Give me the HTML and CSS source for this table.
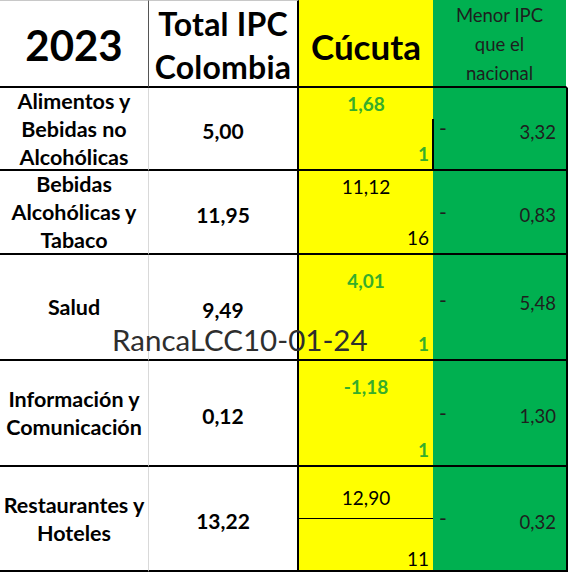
FILE: index.html
```html
<!DOCTYPE html>
<html lang="es">
<head>
  <meta charset="UTF-8" />
  <meta name="viewport" content="width=device-width, initial-scale=1.0"/>
  <title>IPC 2023 Cúcuta</title>
  <link rel="stylesheet" href="styles.css">
</head>
<body>
  <!-- Tabla IPC 2023: Colombia vs Cúcuta -->
  <div class="sheet">
    <div class="cell head year">2023</div>
    <div class="cell head total">Total IPC<br>Colombia</div>
    <div class="cell head city">Cúcuta</div>
    <div class="cell head lower">Menor IPC<br>que el<br>nacional</div>

    <!-- Alimentos -->
    <div class="cell label">Alimentos y<br>Bebidas no<br>Alcohólicas</div>
    <div class="cell total-val">5,00</div>
    <div class="cell city-val">
      <span class="val good">1,68</span>
      <span class="rank good">1</span>
    </div>
    <div class="cell diff first">
      <span class="dash">-</span>
      <span class="num">3,32</span>
    </div>

    <!-- Bebidas alcohólicas -->
    <div class="cell label">Bebidas<br>Alcohólicas y<br>Tabaco</div>
    <div class="cell total-val">11,95</div>
    <div class="cell city-val">
      <span class="val">11,12</span>
      <span class="rank">16</span>
    </div>
    <div class="cell diff">
      <span class="dash">-</span>
      <span class="num">0,83</span>
    </div>

    <!-- Salud -->
    <div class="cell label">Salud</div>
    <div class="cell total-val">9,49</div>
    <div class="cell city-val tall">
      <span class="val good">4,01</span>
      <span class="rank good">1</span>
    </div>
    <div class="cell diff high">
      <span class="dash">-</span>
      <span class="num">5,48</span>
    </div>

    <!-- Información -->
    <div class="cell label">Información y<br>Comunicación</div>
    <div class="cell total-val">0,12</div>
    <div class="cell city-val tall">
      <span class="val good">-1,18</span>
      <span class="rank good">1</span>
    </div>
    <div class="cell diff">
      <span class="dash">-</span>
      <span class="num">1,30</span>
    </div>

    <!-- Restaurantes -->
    <div class="cell label">Restaurantes y<br>Hoteles</div>
    <div class="cell total-val">13,22</div>
    <div class="cell city-val split">
      <span class="half">12,90</span>
      <span class="rank">11</span>
    </div>
    <div class="cell diff">
      <span class="dash">-</span>
      <span class="num">0,32</span>
    </div>
  </div>

  <div class="stamp">RancaLCC10-01-24</div>
</body>
</html>
```

FILE: styles.css
```css
body {
  margin: 0;
  position: relative;
  font-family: Lato, "Open Sans", sans-serif;
  color: #000;
  background: #fff;
}

.sheet {
  display: grid;
  grid-template-columns: 149px 150px 134px 135px;
  grid-template-rows: 88px 83px 84px 106px 106px 105px;
}

.cell {
  box-sizing: border-box;
  border-bottom: 2px solid #000;
}

/* header row */
.head {
  border-top: 1px solid #c8c8c8;
}

.year {
  display: flex;
  align-items: center;
  justify-content: center;
  padding-top: 2px;
  font-size: 42px;
  font-weight: 700;
  border-right: 1px solid #555;
}

.total {
  text-align: center;
  font-size: 32px;
  font-weight: 700;
  line-height: 43px;
  padding-top: 1px;
  letter-spacing: 0.2px;
  border-right: 2px solid #000;
}

.city {
  display: flex;
  align-items: center;
  justify-content: center;
  padding-top: 6px;
  background: #ffff00;
  font-size: 35px;
  font-weight: 700;
  border-top: none;
}

.lower {
  background: #00b050;
  color: #1e1e1e;
  text-align: center;
  font-size: 18.5px;
  line-height: 29px;
  padding-top: 1px;
  border-top: none;
  border-right: 2px solid #fff;
}

/* body rows */
.label {
  display: flex;
  align-items: center;
  justify-content: center;
  text-align: center;
  font-size: 21.5px;
  font-weight: 700;
  line-height: 28px;
  border-right: 1px solid #d9d9d9;
}

.total-val {
  display: flex;
  align-items: center;
  justify-content: center;
  padding-top: 4px;
  font-size: 21px;
  font-weight: 700;
  border-right: 2px solid #000;
}

.city-val {
  display: flex;
  flex-direction: column;
  background: #ffff00;
  font-size: 19px;
  line-height: 20px;
  padding: 6px 4px 5px 0;
}

.city-val.tall {
  padding-top: 16px;
}

.val {
  text-align: center;
  padding-left: 4px;
}

.rank {
  margin-top: auto;
  text-align: right;
}

.good {
  color: #36ad2b;
  font-weight: 700;
}

.city-val.split {
  padding: 0 4px 1px 0;
}

.half {
  height: 52px;
  box-sizing: border-box;
  border-bottom: 1px solid #000;
  margin-right: -4px;
  display: flex;
  align-items: center;
  justify-content: center;
  padding-top: 10px;
}

.diff {
  position: relative;
  display: flex;
  align-items: center;
  justify-content: space-between;
  padding: 6px 10px 0 6px;
  background: #00b050;
  color: #1e1e1e;
  font-size: 18.5px;
  border-right: 2px solid #000;
}

.diff.high {
  padding-top: 0;
  padding-bottom: 8px;
}

.diff.first::before {
  content: "";
  position: absolute;
  left: -1px;
  top: 31px;
  bottom: 0;
  width: 2px;
  background: #000;
}

.dash {
  font-size: 21px;
  margin-top: -8px;
}

/* watermark */
.stamp {
  position: absolute;
  left: 112px;
  top: 326px;
  font-size: 29.5px;
  line-height: 28px;
  color: #2e2e2e;
  white-space: nowrap;
}
```
